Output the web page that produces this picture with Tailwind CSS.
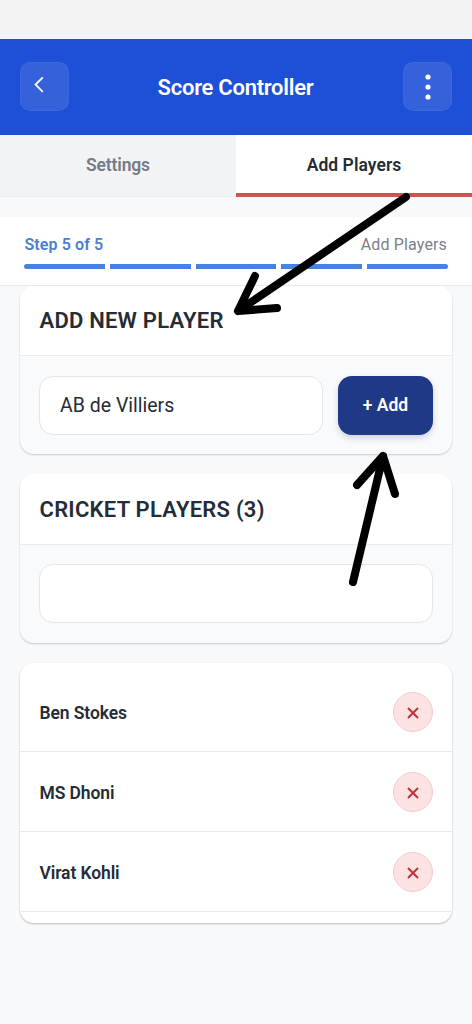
<!DOCTYPE html>
<html lang="en">
<head>
<meta charset="utf-8">
<title>Score Controller</title>
<script src="https://cdn.jsdelivr.net/npm/@tailwindcss/browser@4"></script>
</head>
<body class="bg-[#f8f9fb] font-['Roboto',sans-serif] text-[#252c36]">
<div class="relative flex h-[1024px] w-[472px] flex-col overflow-hidden">
  <div class="h-[39px] shrink-0 bg-[#f3f3f3]"></div>
  <header class="flex h-24 shrink-0 items-center justify-between bg-[#1d4fd7] px-5 pb-0.5">
    <button class="flex size-[49px] rounded-[10px] border border-white/[0.03] bg-white/[0.11] pt-[13px] pl-[11px]">
      <svg class="h-[18px] w-[14px]" viewBox="0 0 14 18" fill="none" stroke="#fff" stroke-width="1.9"><path d="M10.8 1.4 3.6 8.6l7.2 7.2"/></svg>
    </button>
    <h1 class="pt-[3px] pr-px text-[22px] leading-7 font-semibold tracking-[-0.27px] text-white">Score Controller</h1>
    <button class="flex size-[49px] items-center justify-center rounded-[10px] border border-white/[0.03] bg-white/[0.11]">
      <svg class="mt-px h-[30px] w-[6px]" viewBox="0 0 6 30" fill="#fff"><circle cx="3" cy="5" r="2.6"/><circle cx="3" cy="15" r="2.6"/><circle cx="3" cy="25" r="2.6"/></svg>
    </button>
  </header>
  <nav class="flex h-[62px] shrink-0 text-[17.5px] font-semibold">
    <div class="flex w-1/2 items-center justify-center border-b border-[#e9ebee] bg-[#f2f3f5] tracking-[-0.15px] text-[#757b87]">Settings</div>
    <div class="flex w-1/2 items-center justify-center border-b-4 border-[#d35151] bg-white pt-[3px] tracking-[0.05px]">Add Players</div>
  </nav>
  <section class="mt-5 flex h-[69px] shrink-0 flex-col border-b border-[#e9ebed] bg-white px-6 pt-4">
    <div class="flex items-center justify-between text-[16px] leading-6 tracking-[0.1px]">
      <span class="pl-[0.5px] font-semibold text-[#4a7fd6]">Step 5 of 5</span>
      <span class="pr-px tracking-[0.15px] text-[#7b8089]">Add Players</span>
    </div>
    <div class="mt-[7px] grid h-[5px] grid-cols-5 gap-[5px]">
      <div class="rounded-l-full bg-[#4682df]"></div><div class="bg-[#4682df]"></div><div class="bg-[#4682df]"></div><div class="bg-[#4682df]"></div><div class="rounded-r-full bg-[#4682df]"></div>
    </div>
  </section>
  <main class="flex flex-col gap-5 px-5">
    <section class="h-[168px] overflow-hidden rounded-[14px] bg-[#f9fafc] shadow-[0_1px_2px_rgba(0,0,0,0.2)]">
      <h2 class="flex h-[70px] items-center border-b border-[#e9ebee] bg-white px-[19.5px] text-[22px] font-semibold tracking-[0.22px]">ADD NEW PLAYER</h2>
      <div class="flex gap-[15px] pt-[20px] pl-[19px]">
        <div class="flex h-[59px] w-[284px] items-center rounded-[14px] border border-[#e3e5e8] bg-white px-5 text-[19.5px]">AB de Villiers</div>
        <button class="h-[59px] w-[95px] rounded-[14px] bg-[#203986] text-[17.5px] font-semibold text-white shadow-[0_3px_6px_rgba(32,57,134,0.2)]">+ Add</button>
      </div>
    </section>
    <section class="h-[169px] overflow-hidden rounded-[14px] bg-[#f9fafc] shadow-[0_1px_2px_rgba(0,0,0,0.2)]">
      <h2 class="flex h-[71px] items-center border-b border-[#e9ebee] bg-white px-[19.5px] text-[22px] font-semibold tracking-[0.25px]">CRICKET PLAYERS (3)</h2>
      <div class="px-[19px] pt-[19px]"><div class="h-[59px] rounded-[14px] border border-[#e3e5e8] bg-white"></div></div>
    </section>
    <ul class="h-[260px] overflow-hidden rounded-[14px] bg-white pt-[9px] text-[17.5px] font-semibold tracking-[-0.1px] shadow-[0_1px_2px_rgba(0,0,0,0.25)]">
      <li class="flex h-20 items-center justify-between border-b border-[#e8eaec] pr-[19px] pl-[19.5px]"><span class="pt-[3px]">Ben Stokes</span>
        <span class="flex size-10 items-center justify-center rounded-full border border-[#f5cccd] bg-[#fce2e2]"><svg class="mt-[3px] size-3" viewBox="0 0 12 12" fill="none" stroke="#bd3338" stroke-width="2"><path d="m1 1 10 10M11 1 1 11"/></svg></span></li>
      <li class="flex h-20 items-center justify-between border-b border-[#e8eaec] pr-[19px] pl-[19.5px]"><span class="pt-[3px]">MS Dhoni</span>
        <span class="flex size-10 items-center justify-center rounded-full border border-[#f5cccd] bg-[#fce2e2]"><svg class="mt-[3px] size-3" viewBox="0 0 12 12" fill="none" stroke="#bd3338" stroke-width="2"><path d="m1 1 10 10M11 1 1 11"/></svg></span></li>
      <li class="flex h-20 items-center justify-between border-b border-[#e8eaec] pr-[19px] pl-[19.5px]"><span class="pt-[3px]">Virat Kohli</span>
        <span class="flex size-10 items-center justify-center rounded-full border border-[#f5cccd] bg-[#fce2e2]"><svg class="mt-[3px] size-3" viewBox="0 0 12 12" fill="none" stroke="#bd3338" stroke-width="2"><path d="m1 1 10 10M11 1 1 11"/></svg></span></li>
    </ul>
  </main>
  <svg class="pointer-events-none absolute inset-0" width="472" height="1024" viewBox="0 0 472 1024" fill="none" stroke="#000" stroke-width="8" stroke-linecap="round" stroke-linejoin="round">
    <path d="M406 197 238 311M255 276 238 311l39-3"/>
    <path d="M353 582 383 456M357 485l26-29 12 38"/>
  </svg>
</div>
</body>
</html>
